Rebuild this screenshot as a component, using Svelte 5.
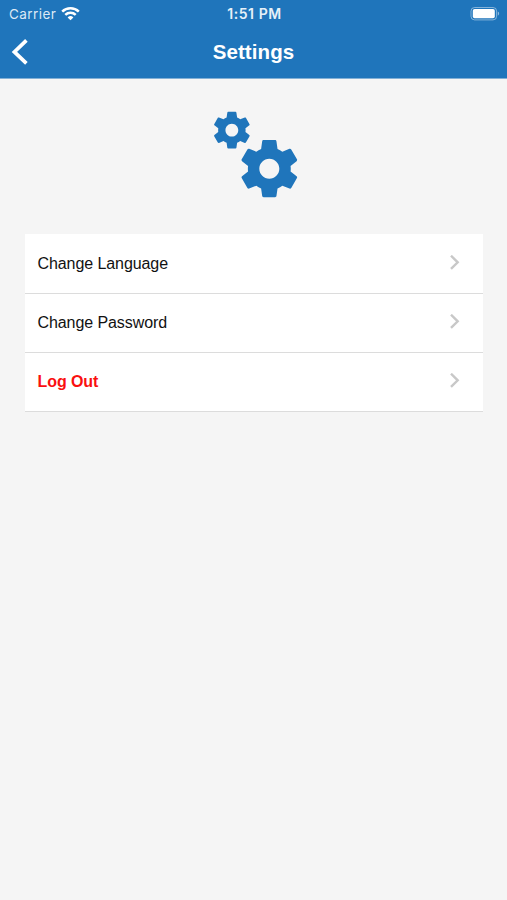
<script lang="ts">
	interface MenuItem {
		id: string;
		label: string;
		danger?: boolean;
	}

	const items: MenuItem[] = [
		{ id: 'language', label: 'Change Language' },
		{ id: 'password', label: 'Change Password' },
		{ id: 'logout', label: 'Log Out', danger: true }
	];

	const gear =
		'M19.43 12.98c.04-.32.07-.64.07-.98s-.03-.66-.07-.98l2.11-1.65c.19-.15.24-.42.12-.64l-2-3.46c-.12-.22-.39-.3-.61-.22l-2.49 1c-.52-.4-1.08-.73-1.69-.98l-.38-2.65C14.46 2.18 14.25 2 14 2h-4c-.25 0-.46.18-.49.42l-.38 2.65c-.61.25-1.17.59-1.69.98l-2.49-1c-.23-.09-.49 0-.61.22l-2 3.46c-.13.22-.07.49.12.64l2.11 1.65c-.04.32-.07.65-.07.98s.03.66.07.98l-2.11 1.65c-.19.15-.24.42-.12.64l2 3.46c.12.22.39.3.61.22l2.49-1c.52.4 1.08.73 1.69.98l.38 2.65c.03.24.24.42.49.42h4c.25 0 .46-.18.49-.42l.38-2.65c.61-.25 1.17-.59 1.69-.98l2.49 1c.23.09.49 0 .61-.22l2-3.46c.12-.22.07-.49-.12-.64l-2.11-1.65zM12 15.5c-1.93 0-3.5-1.57-3.5-3.5s1.57-3.5 3.5-3.5 3.5 1.57 3.5 3.5-1.57 3.5-3.5 3.5z';
</script>

<div class="screen">
	<header>
		<div class="status">
			<div class="carrier">
				<span>Carrier</span>
				<svg width="19" height="14" viewBox="0 0 19 14" fill="none" stroke="#fff" stroke-width="2.5">
					<path d="M1.2 4.7a11.8 11.8 0 0 1 16.6 0" />
					<path d="M4.3 7.9a7.4 7.4 0 0 1 10.4 0" />
					<path d="M9.5 13.3l-2.9-2.9a4.1 4.1 0 0 1 5.8 0z" fill="#fff" stroke="none" />
				</svg>
			</div>
			<span class="time">1:51 PM</span>
			<svg class="battery" width="30" height="14" viewBox="0 0 30 14">
				<rect x="1" y="0.5" width="25.6" height="12.4" rx="3.6" fill="none" stroke="#fff" stroke-opacity="0.45" />
				<rect x="2.8" y="2" width="22" height="9.2" rx="1.8" fill="#fff" />
				<path d="M27.8 4.5c1.8.7 1.8 3.5 0 4.2z" fill="#fff" fill-opacity="0.5" />
			</svg>
		</div>
		<div class="navbar">
			<button type="button" aria-label="Back">
				<svg width="18" height="28" viewBox="0 0 18 28" fill="none" stroke="#fff" stroke-width="3.7">
					<path d="M16.4 2.4L4.4 13.9l12 11.5" />
				</svg>
			</button>
			<h1>Settings</h1>
			<span></span>
		</div>
	</header>

	<main>
		<svg class="gears" width="90" height="88" viewBox="0 0 90 88" fill="#1f75bb">
			<path d={gear} transform="translate(0.9 -2.8) scale(1.83)" />
			<path d={gear} transform="translate(26 23.4) scale(2.86)" />
		</svg>

		<ul>
			{#each items as item (item.id)}
				<li>
					<span class:danger={item.danger}>{item.label}</span>
					<svg width="12" height="18" viewBox="0 0 12 18" fill="none" stroke="#c8c8c8" stroke-width="2.4">
						<path d="M2 0.7L8.7 7.3 2 13.9" />
					</svg>
				</li>
			{/each}
		</ul>
	</main>
</div>

<style>
	:global(body) {
		margin: 0;
		background: #f5f5f5;
	}

	.screen {
		min-height: 900px;
		background: #f5f5f5;
		font-family: 'Liberation Sans', Arial, sans-serif;
	}

	header {
		box-sizing: border-box;
		height: 79px;
		background: #1f75bb;
		border-bottom: 1px solid #82b0d6;
		color: #fff;
	}

	.status {
		display: grid;
		grid-template-columns: 1fr auto 1fr;
		align-items: center;
		height: 27px;
		padding: 0 7px 0 9px;
		font-family: Inter, sans-serif;
		font-size: 13.5px;
	}

	.carrier {
		display: flex;
		align-items: center;
		gap: 5px;
		color: #dce9f5;
		letter-spacing: 0.45px;
	}

	.time {
		font-size: 14px;
		font-weight: 600;
		letter-spacing: 0.55px;
		color: #e6f0f8;
	}

	.battery {
		justify-self: end;
	}

	.navbar {
		display: grid;
		grid-template-columns: 1fr auto 1fr;
		align-items: center;
		height: 50px;
		padding: 0 10px;
	}

	button {
		display: flex;
		justify-self: start;
		padding: 0;
		border: none;
		background: none;
	}

	h1 {
		margin: 0;
		font-size: 20.5px;
		line-height: 24px;
		letter-spacing: 0.1px;
	}

	main {
		display: flex;
		flex-direction: column;
		align-items: center;
		padding: 32px 24px 0 25px;
	}

	.gears {
		margin-right: 1px;
	}

	ul {
		align-self: stretch;
		margin: 35px 0 0;
		padding: 1px 0 0;
		background: #fff;
		list-style: none;
	}

	li {
		display: flex;
		align-items: center;
		justify-content: space-between;
		box-sizing: border-box;
		height: 59px;
		padding: 0 22px 0 12.5px;
		border-bottom: 1px solid #dcdcdc;
		font-size: 16px;
		letter-spacing: -0.08px;
		color: #111;
	}

	.danger {
		font-weight: bold;
		color: #fa0f10;
	}
</style>
